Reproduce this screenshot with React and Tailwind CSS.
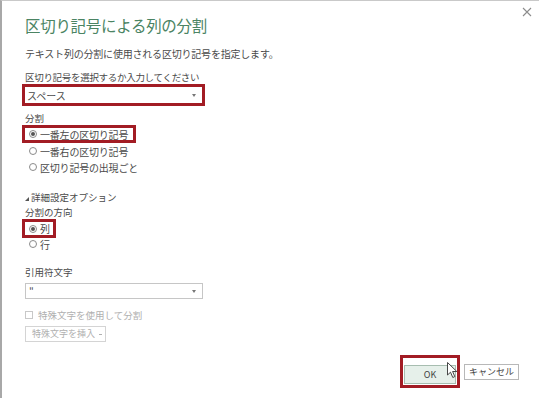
import React from 'react';

const font = { fontFamily: '"Noto Sans CJK JP", "Noto Sans", sans-serif' };

function Radio({ checked }) {
  return (
    <span className="w-[8px] h-[8px] rounded-full border border-[#8a8a8a] bg-white flex items-center justify-center shrink-0">
      {checked && <span className="w-[4px] h-[4px] rounded-full bg-[#555]" />}
    </span>
  );
}

function Caret({ className = '' }) {
  return <span className={`w-0 h-0 border-l-[2px] border-r-[2px] border-t-[3px] border-l-transparent border-r-transparent border-t-[#777] ${className}`} />;
}

export default function App() {
  return (
    <div style={font} className="relative w-[539px] h-[398px] bg-white border-l-2 border-l-[#a8a8a8] border-t border-t-[#c9c9c9] overflow-hidden text-[#4a4a4a]">
      <svg className="absolute right-[7px] top-[6px]" width="10" height="10" viewBox="0 0 10 10">
        <path d="M1 1 L9 9 M9 1 L1 9" stroke="#8c8c8c" strokeWidth="1.1" />
      </svg>

      <div className="flex flex-col pl-[23px] pt-[12px]">
        <h1 className="h-[24px] text-[15.5px] leading-[24px] text-[#4b8463] tracking-[-0.3px]">区切り記号による列の分割</h1>
        <p className="mt-[10px] h-[14px] text-[10px] leading-[14px] tracking-[-0.2px]">テキスト列の分割に使用される区切り記号を指定します。</p>

        <p className="mt-[9px] h-[14px] text-[9.5px] leading-[14px] tracking-[-0.3px]">区切り記号を選択するか入力してください</p>
        <div className="-ml-[3px] w-[183px] border-[3px] border-[#a21c24]">
          <div className="h-[16px] bg-white flex items-center justify-between pl-[2px] pr-[6px] text-[10px]">
            <span>スペース</span>
            <Caret />
          </div>
        </div>

        <p className="mt-[5px] h-[14px] text-[9.5px] leading-[14px]">分割</p>
        <div className="-ml-[3px] w-[114px] h-[18px] border-[3px] border-[#a21c24] flex items-center gap-[3px] pl-[4px] text-[10px]">
          <Radio checked />
          <span className="tracking-[-0.2px]">一番左の区切り記号</span>
        </div>
        <div className="h-[16px] flex items-center gap-[3px] pl-[4px] text-[10px]">
          <Radio />
          <span className="tracking-[-0.2px]">一番右の区切り記号</span>
        </div>
        <div className="h-[16px] flex items-center gap-[3px] pl-[4px] text-[10px]">
          <Radio />
          <span className="tracking-[-0.2px]">区切り記号の出現ごと</span>
        </div>

        <div className="mt-[15px] h-[14px] flex items-center gap-[2px] text-[9.5px]">
          <svg width="4" height="4" viewBox="0 0 4 4" className="mt-[3px]">
            <path d="M4 0 L4 4 L0 4 Z" fill="#555" />
          </svg>
          <span>詳細設定オプション</span>
        </div>
        <p className="mt-[1px] h-[14px] text-[9.5px] leading-[14px]">分割の方向</p>
        <div className="-ml-[3px] w-[34px] h-[19px] border-[3px] border-[#a21c24] flex items-center gap-[3px] pl-[4px] text-[10px]">
          <Radio checked />
          <span>列</span>
        </div>
        <div className="h-[12px] flex items-center gap-[3px] pl-[4px] text-[10px]">
          <Radio />
          <span>行</span>
        </div>

        <p className="mt-[15px] h-[14px] text-[9.5px] leading-[14px]">引用符文字</p>
        <div className="mt-[4px] w-[178px] h-[16px] border border-[#c6c6c6] flex items-center justify-between pl-[3px] pr-[6px] text-[10px]">
          <span className="leading-none">"</span>
          <Caret />
        </div>

        <div className="mt-[9px] h-[14px] flex items-center gap-[5px] text-[9.5px] text-[#b0b0b0]">
          <span className="w-[8px] h-[8px] border border-[#c8c8c8]" />
          <span>特殊文字を使用して分割</span>
        </div>
        <div className="mt-[4px] w-[81px] h-[16px] border border-[#d4d4d4] flex items-center gap-[4px] pl-[6px] text-[9px] text-[#b0b0b0]">
          <span>特殊文字を挿入</span>
          <span className="w-[3px] h-px bg-[#b0b0b0]" />
        </div>

        <div className="mt-[13px] flex items-center justify-end gap-[4px] pr-[20px]">
          <div className="relative border-[3px] border-[#a21c24] p-[1px]">
            <button className="w-[52px] h-[19px] bg-[#e6f0ea] border border-[#a7bdb0] text-[9px] text-[#444]">OK</button>
            <svg className="absolute left-[44px] top-[4px]" width="11" height="17" viewBox="0 0 11 17">
              <path d="M0.5 0.5 L0.5 13 L3.5 10.2 L5.8 15.5 L7.8 14.6 L5.6 9.5 L9.8 9.5 Z" fill="#fff" stroke="#333" strokeWidth="0.9" strokeLinejoin="round" />
            </svg>
          </div>
          <button className="w-[55px] h-[16px] bg-white border border-[#b8b8b8] text-[9px] text-[#444]">キャンセル</button>
        </div>
      </div>
    </div>
  );
}
